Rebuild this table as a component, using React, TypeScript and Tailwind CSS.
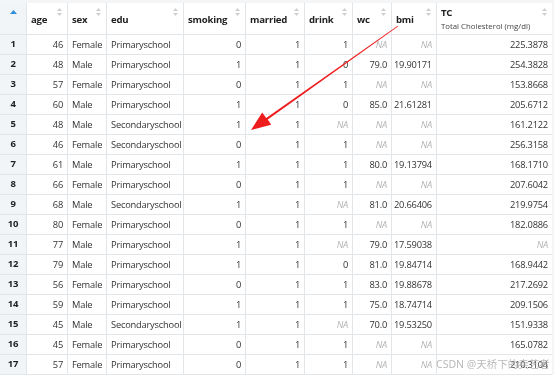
import React from 'react';

type Row = (string | number | null)[];

const rows: Row[] = [
    [46, 'Female', 'Primaryschool', 0, 1, 1, null, null, '225.3878'],
    [48, 'Male', 'Primaryschool', 1, 1, 0, '79.0', '19.90171', '254.3828'],
    [57, 'Female', 'Primaryschool', 0, 1, 1, null, null, '153.8668'],
    [60, 'Male', 'Primaryschool', 1, 1, 0, '85.0', '21.61281', '205.6712'],
    [48, 'Male', 'Secondaryschool', 1, 1, null, null, null, '161.2122'],
    [46, 'Female', 'Secondaryschool', 0, 1, 1, null, null, '256.3158'],
    [61, 'Male', 'Primaryschool', 1, 1, 1, '80.0', '19.13794', '168.1710'],
    [66, 'Female', 'Primaryschool', 0, 1, 1, null, null, '207.6042'],
    [68, 'Male', 'Secondaryschool', 1, 1, null, '81.0', '20.66406', '219.9754'],
    [80, 'Female', 'Primaryschool', 0, 1, 1, null, null, '182.0886'],
    [77, 'Male', 'Primaryschool', 1, 1, null, '79.0', '17.59038', null],
    [79, 'Male', 'Primaryschool', 1, 1, 0, '81.0', '19.84714', '168.9442'],
    [56, 'Female', 'Primaryschool', 0, 1, 1, '83.0', '19.88678', '217.2692'],
    [59, 'Male', 'Primaryschool', 1, 1, 1, '75.0', '18.74714', '209.1506'],
    [45, 'Male', 'Secondaryschool', 1, 1, null, '70.0', '19.53250', '151.9338'],
    [45, 'Female', 'Primaryschool', 0, 1, 1, null, null, '165.0782'],
    [57, 'Female', 'Primaryschool', 0, 1, 1, null, null, '210.3104'],
];

const headers = ['age', 'sex', 'edu', 'smoking', 'married', 'drink', 'wc', 'bmi'];
// text columns are left aligned, the rest right aligned
const textCols = [1, 2];

function SortCaret() {
    return (
        <svg className="absolute top-[5px] right-[5px]" width="5" height="8" viewBox="0 0 5 8">
            <path d="M2.5 0 L5 3 L0 3 Z" fill="#cfcfcf" />
            <path d="M2.5 8 L5 5 L0 5 Z" fill="#cfcfcf" />
        </svg>
    );
}

export default function App() {
    return (
        <div
            className="relative w-[554px] h-[375px] overflow-hidden bg-[#f3f5f7] pt-[3px] text-[#333] tracking-[-0.2px] antialiased"
            style={{ fontFamily: '"Open Sans", "Noto Sans", sans-serif' }}
        >
            <div className="grid w-[552px] bg-white/[0.99] will-change-transform grid-cols-[27px_41px_39px_77px_62px_59px_48px_39px_45px_115px] auto-rows-[20px] grid-rows-[32px]">
                <div className="relative bg-[#f2f5f8] border-r border-b border-[#e3e6e9]">
                    <svg className="absolute top-[7px] left-[10px]" width="7" height="4" viewBox="0 0 7 4">
                        <path d="M3.5 0 L7 4 L0 4 Z" fill="#2f8fd8" />
                    </svg>
                </div>
                {headers.map((h) => (
                    <div
                        key={h}
                        className="relative flex items-center pl-[4px] pt-[3px] border-r border-b border-[#e3e6e9] text-[9.6px] font-bold text-[#222]"
                    >
                        {h}
                        <SortCaret />
                    </div>
                ))}
                <div className="relative flex flex-col justify-center pl-[4px] pt-[1px] border-b border-[#e3e6e9] text-[#222]">
                    <span className="text-[9.6px] font-bold leading-[14px]">TC</span>
                    <span className="text-[7.8px] leading-[13px] text-[#444] tracking-normal">Total Cholesterol (mg/dl)</span>
                    <SortCaret />
                </div>

                {rows.map((r, i) => (
                    <React.Fragment key={i}>
                        <div className="flex items-center justify-center bg-[#f2f5f8] border-r border-b border-[#e3e6e9] text-[9.5px] font-bold text-[#222]">
                            {i + 1}
                        </div>
                        {r.map((v, j) => (
                            <div
                                key={j}
                                className={`flex items-center border-b border-[#e3e6e9] text-[9.3px] ${
                                    j < r.length - 1 ? 'border-r' : ''
                                } ${textCols.includes(j) ? 'justify-start pl-[4px]' : 'justify-end pr-[4px]'}`}
                            >
                                {v === null ? <span className="italic text-[#b4b4b4]">NA</span> : v}
                            </div>
                        ))}
                    </React.Fragment>
                ))}
            </div>

            {/* red annotation arrow */}
            <svg className="absolute inset-0 pointer-events-none" width="554" height="375" viewBox="0 0 554 375">
                <polygon
                    points="398.3,26.3 397.7,25.7 266.2,117.9 262.2,112.4 251,130 271.2,124.8 267.8,119.4"
                    fill="#ee1d1d"
                />
            </svg>

            {/* watermark */}
            <div
                className="absolute left-[436px] top-[357px] text-[10.5px] leading-[15px] text-[#a8a8a8]/80 tracking-normal whitespace-nowrap"
                style={{ fontFamily: '"Noto Sans", "Noto Sans CJK SC", sans-serif' }}
            >
                CSDN @天桥下的卖艺者
            </div>
        </div>
    );
}
